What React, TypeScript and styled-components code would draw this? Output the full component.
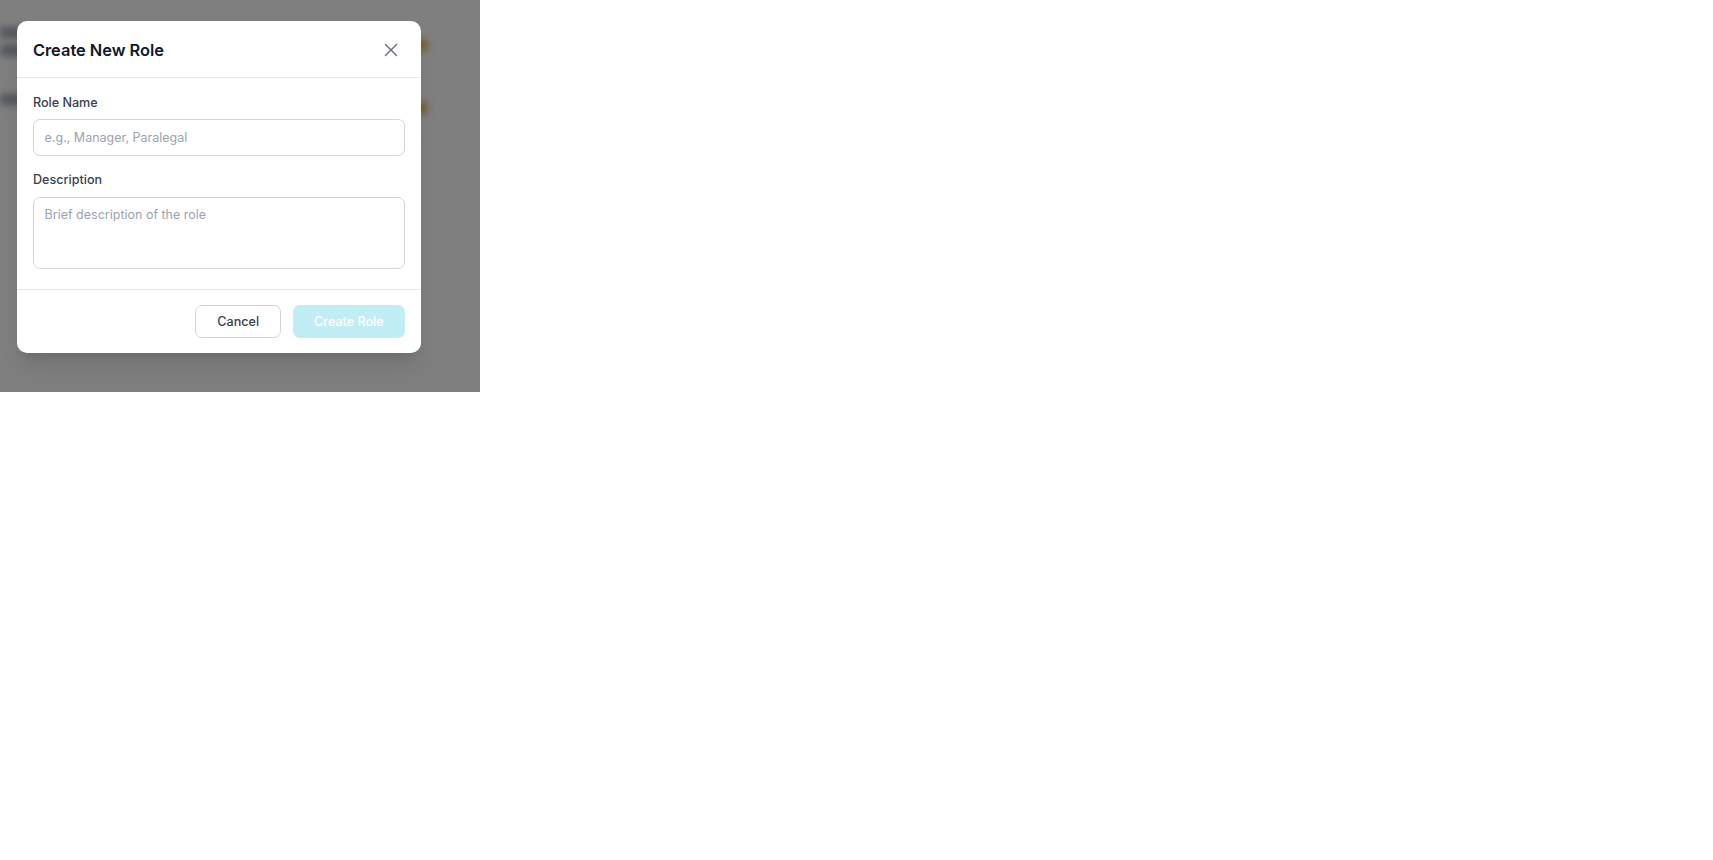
import * as React from 'react'
import styled, { createGlobalStyle } from 'styled-components'
import { X } from 'lucide-react'

const GlobalStyle = createGlobalStyle`
  html, body {
    margin: 0;
    padding: 0;
    background: #ffffff;
    font-family: Inter, "Noto Sans", "Liberation Sans", sans-serif;
    -webkit-font-smoothing: antialiased;
  }
  * {
    box-sizing: border-box;
  }
`

// the small app frame the dialog was opened in
const Frame = styled.div`
  position: relative;
  width: 480px;
  height: 392px;
  overflow: hidden;
  background: #ffffff;
`

// the roles list behind the dialog, only seen blurred through the overlay
const PageBehind = styled.div`
  display: flex;
  flex-direction: column;
  padding-top: 10px;
  filter: blur(4px);
`

const BehindRow = styled.div`
  display: flex;
  align-items: center;
  justify-content: space-between;
  height: 64px;
  padding: 0 53px 0 0;
  border-bottom: 1px solid #eef0f3;
`

const BehindLines = styled.div<{ $offset?: number }>`
  display: flex;
  flex-direction: column;
  gap: 9px;
  margin-top: ${(p) => p.$offset ?? 0}px;
`

const BehindBar = styled.span<{ $w: number }>`
  display: block;
  width: ${(p) => p.$w}px;
  height: 9px;
  border-radius: 3px;
  background: #8b93a1;
`

const BehindBadge = styled.span<{ $offset?: number }>`
  width: 12px;
  height: 12px;
  border-radius: 50%;
  background: #d9a520;
  margin-top: ${(p) => p.$offset ?? 0}px;
`

const Overlay = styled.div`
  position: absolute;
  inset: 0;
  display: flex;
  align-items: flex-start;
  justify-content: flex-start;
  padding: 20.7px 0 0 17.4px;
  background: rgba(0, 0, 0, 0.5);
`

const Dialog = styled.div`
  width: 403.3px;
  background: #ffffff;
  border-radius: 10px;
  box-shadow: 0 18px 22px -5px rgba(0, 0, 0, 0.1), 0 7px 9px -6px rgba(0, 0, 0, 0.1);
  overflow: hidden;
`

const Header = styled.div`
  display: flex;
  align-items: center;
  justify-content: space-between;
  height: 57.6px;
  padding: 2px 15.5px 0;
  border-bottom: 1px solid #e5e7eb;
`

const Title = styled.h2`
  margin: 0;
  font-size: 16.4px;
  line-height: 22px;
  font-weight: 600;
  color: #111827;
`

const CloseButton = styled.button`
  display: flex;
  align-items: center;
  justify-content: center;
  width: 24px;
  height: 24px;
  padding: 0;
  margin-right: 2.2px;
  border: none;
  background: transparent;
  color: #6b7280;
  cursor: pointer;
`

const Body = styled.div`
  display: flex;
  flex-direction: column;
  padding: 15.4px 15.5px 20.2px;
`

const Field = styled.div<{ $gap?: number }>`
  display: flex;
  flex-direction: column;
  gap: 7.8px;
  margin-top: ${(p) => p.$gap ?? 0}px;
`

const Label = styled.label`
  font-size: 12.6px;
  line-height: 18px;
  font-weight: 500;
  color: #374151;
`

const inputBase = `
  display: block;
  width: 100%;
  margin: 0;
  border: 1px solid #d1d5db;
  border-radius: 7px;
  background: #ffffff;
  font-family: Inter, "Noto Sans", "Liberation Sans", sans-serif;
  font-size: 12.5px;
  line-height: 18px;
  color: #111827;
  outline: none;
  &::placeholder {
    color: #9ca3af;
  }
`

const TextInput = styled.input`
  ${inputBase}
  height: 36.7px;
  padding: 0 10.7px;
`

const TextArea = styled.textarea`
  ${inputBase}
  height: 72.6px;
  padding: 8px 10.7px;
  resize: none;
`

const Footer = styled.div`
  display: flex;
  align-items: center;
  justify-content: flex-end;
  gap: 11.3px;
  padding: 14.3px 15.7px 15px;
  border-top: 1px solid #e5e7eb;
`

const Button = styled.button<{ $primary?: boolean }>`
  display: inline-flex;
  align-items: center;
  justify-content: center;
  height: ${(p) => (p.$primary ? '32.4px' : '33.7px')};
  width: ${(p) => (p.$primary ? '112.3px' : '86.3px')};
  padding: 0;
  border-radius: 7px;
  border: ${(p) => (p.$primary ? 'none' : '1px solid #d1d5db')};
  background: ${(p) => (p.$primary ? '#c1edf4' : '#ffffff')};
  color: ${(p) => (p.$primary ? '#ffffff' : '#374151')};
  font-family: Inter, "Noto Sans", "Liberation Sans", sans-serif;
  font-size: 12.6px;
  font-weight: 500;
  cursor: ${(p) => (p.$primary ? 'not-allowed' : 'pointer')};
`

const App: React.FC = () => {
  const [name, setName] = React.useState('')
  const [description, setDescription] = React.useState('')

  return (
    <>
      <GlobalStyle />
      <Frame>
        <PageBehind aria-hidden="true">
          <BehindRow>
            <BehindLines $offset={0}>
              <BehindBar $w={40} />
              <BehindBar $w={30} />
            </BehindLines>
            <BehindBadge $offset={6} />
          </BehindRow>
          <BehindRow>
            <BehindLines $offset={-12}>
              <BehindBar $w={40} />
            </BehindLines>
            <BehindBadge $offset={5} />
          </BehindRow>
        </PageBehind>
        <Overlay>
          <Dialog role="dialog" aria-labelledby="create-role-title">
            <Header>
              <Title id="create-role-title">Create New Role</Title>
              <CloseButton aria-label="Close">
                <X size={22} strokeWidth={1.6} />
              </CloseButton>
            </Header>
            <Body>
              <Field>
                <Label htmlFor="role-name">Role Name</Label>
                <TextInput
                  id="role-name"
                  placeholder="e.g., Manager, Paralegal"
                  value={name}
                  onChange={(e) => setName(e.target.value)}
                />
              </Field>
              <Field $gap={14.7}>
                <Label htmlFor="role-description">Description</Label>
                <TextArea
                  id="role-description"
                  placeholder="Brief description of the role"
                  value={description}
                  onChange={(e) => setDescription(e.target.value)}
                />
              </Field>
            </Body>
            <Footer>
              <Button>Cancel</Button>
              <Button $primary disabled={!name.trim()}>
                Create Role
              </Button>
            </Footer>
          </Dialog>
        </Overlay>
      </Frame>
    </>
  )
}

export default App
